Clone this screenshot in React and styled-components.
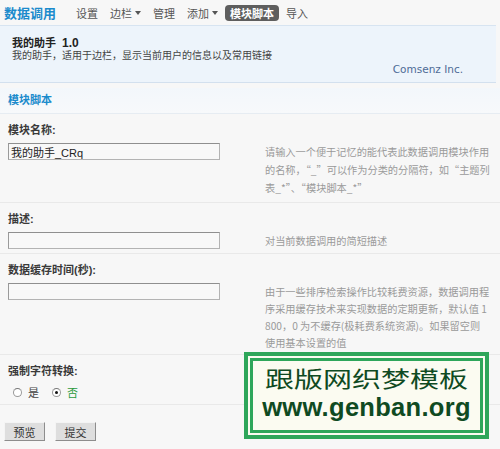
import React from "react";
import styled, { createGlobalStyle } from "styled-components";

const GlobalStyle = createGlobalStyle`
  body {
    margin: 0;
    background: #f7f7f7;
    font-family: "Liberation Sans", "Noto Sans CJK SC", sans-serif;
    color: #333;
  }
`;

const Page = styled.div`
  position: relative;
  width: 500px;
  height: 449px;
  overflow: hidden;
`;

const TopBar = styled.div`
  display: flex;
  align-items: center;
  height: 25px;
  padding-left: 4px;
`;

const Title = styled.h1`
  margin: 0 15px 0 0;
  font-size: 13px;
  font-weight: bold;
  color: #1b8bcc;
`;

const NavItem = styled.a`
  display: flex;
  align-items: center;
  height: 16px;
  padding: 0 5px;
  margin-right: 2px;
  border-radius: 4px;
  font-size: 11px;
  font-weight: ${(p) => (p.$active ? "bold" : "normal")};
  color: ${(p) => (p.$active ? "#fff" : "#555")};
  background: ${(p) => (p.$active ? "#5e5e5e" : "transparent")};
  text-decoration: none;
`;

const Caret = styled.span`
  margin-left: 3px;
  width: 0;
  height: 0;
  border-left: 3px solid transparent;
  border-right: 3px solid transparent;
  border-top: 4px solid #555;
`;

const InfoBox = styled.div`
  margin-right: 4px;
  padding: 11px 33px 6px 12px;
  background: #edf4fb;
  border-top: 1px solid #d7e4f1;
  border-bottom: 1px solid #d3e0ee;
`;

const InfoTitle = styled.div`
  font-size: 11px;
  font-weight: bold;
  line-height: 13px;
  color: #222;
  span {
    margin-left: 6px;
    font-size: 12px;
  }
`;

const InfoDesc = styled.div`
  font-size: 10px;
  line-height: 12px;
  color: #444;
`;

const InfoVendor = styled.div`
  text-align: right;
  font-family: "DejaVu Sans", sans-serif;
  font-size: 10.5px;
  line-height: 14px;
  color: #4d6b96;
`;

const SectionHead = styled.h3`
  margin: 5px 0 0;
  padding-left: 8px;
  height: 25px;
  line-height: 25px;
  font-size: 11px;
  font-weight: bold;
  color: #1b8bcc;
  background: linear-gradient(#f3f7fb, #f7f9fb);
  border-bottom: 1px solid #e6ecf2;
`;

const Group = styled.div`
  padding: 8px 0 ${(p) => p.$pb || 5}px 8px;
  border-top: ${(p) => (p.$first ? "none" : "1px solid #e9e9e9")};
`;

const Label = styled.div`
  font-size: 11px;
  font-weight: bold;
  line-height: 16px;
  color: #3a3a3a;
`;

const FieldRow = styled.div`
  display: grid;
  grid-template-columns: 257px 1fr;
  align-items: start;
  margin-top: 5px;
`;

const TextInput = styled.input`
  box-sizing: border-box;
  width: 212px;
  height: 17px;
  margin: 0;
  padding: 0 2px;
  font-family: "Liberation Sans", "Noto Sans CJK SC", sans-serif;
  font-size: 11px;
  color: #222;
  background: #f8f8f8;
  border: 1px solid #b3b3b3;
  border-top-color: #8f8f8f;
  border-left-color: #9a9a9a;
  outline: none;
`;

const Tip = styled.div`
  font-family: "Noto Sans CJK SC", sans-serif;
  font-size: 10.2px;
  line-height: ${(p) => p.$lh || 17}px;
  color: #9a9a9a;
  white-space: nowrap;
  span {
    display: block;
  }
`;

const Radios = styled.div`
  display: flex;
  align-items: center;
  height: 20px;
  margin-top: 3px;
  padding-left: 5px;
`;

const RadioOption = styled.label`
  display: flex;
  align-items: center;
  margin-right: 13px;
  font-size: 11px;
  color: ${(p) => (p.$checked ? "#2a9a3c" : "#444")};
`;

const RadioDot = styled.span`
  position: relative;
  box-sizing: border-box;
  width: 9px;
  height: 9px;
  margin-right: 6px;
  border-radius: 50%;
  background: #fff;
  border: 1px solid #9a9a9a;
  border-top-color: #777;
  &::after {
    content: "";
    display: ${(p) => (p.$checked ? "block" : "none")};
    position: absolute;
    left: 2px;
    top: 2px;
    width: 3px;
    height: 3px;
    border-radius: 50%;
    background: #111;
  }
`;

const Actions = styled.div`
  display: flex;
  gap: 10px;
  padding: 17px 0 0 4px;
  border-top: 1px solid #e9e9e9;
`;

const Button = styled.button`
  width: 41px;
  height: 19px;
  padding: 0;
  font-family: "Liberation Sans", "Noto Sans CJK SC", sans-serif;
  font-size: 11px;
  color: #333;
  background: #dedede;
  border: 1px solid;
  border-color: #f4f4f4 #8d8d8d #8d8d8d #f4f4f4;
`;

const Watermark = styled.div`
  position: absolute;
  left: 244px;
  top: 352px;
  width: 245px;
  height: 87px;
  box-sizing: border-box;
  border: 4px solid #2ea65a;
  padding: 2px;
  background: #fbfbf1;
`;

const WatermarkInner = styled.div`
  box-sizing: border-box;
  height: 100%;
  border: 3px solid #2ea65a;
  display: flex;
  flex-direction: column;
  align-items: center;
  color: #0f4a22;
`;

const WmTitle = styled.div`
  font-family: "Noto Sans CJK SC", sans-serif;
  font-size: 29px;
  line-height: 32px;
  transform: scaleY(0.75);
`;

const WmUrl = styled.div`
  font-family: "Liberation Sans", sans-serif;
  font-weight: bold;
  font-size: 25.5px;
  line-height: 29px;
  letter-spacing: 0.3px;
`;

const navItems = [
  { label: "设置" },
  { label: "边栏", caret: true },
  { label: "管理" },
  { label: "添加", caret: true },
  { label: "模块脚本", active: true },
  { label: "导入" },
];

const App = () => {
  return (
    <Page>
      <GlobalStyle />
      <TopBar>
        <Title>数据调用</Title>
        {navItems.map((item) => (
          <NavItem key={item.label} $active={item.active}>
            {item.label}
            {item.caret && <Caret />}
          </NavItem>
        ))}
      </TopBar>

      <InfoBox>
        <InfoTitle>
          我的助手<span>1.0</span>
        </InfoTitle>
        <InfoDesc>我的助手，适用于边栏，显示当前用户的信息以及常用链接</InfoDesc>
        <InfoVendor>Comsenz Inc.</InfoVendor>
      </InfoBox>

      <SectionHead>模块脚本</SectionHead>

      <Group $first $pb={0}>
        <Label>模块名称:</Label>
        <FieldRow>
          <TextInput defaultValue="我的助手_CRq" />
          <Tip $lh={18}>
            <span>请输入一个便于记忆的能代表此数据调用模块作用</span>
            <span>的名称，“_”可以作为分类的分隔符，如“主题列</span>
            <span>表_*”、“模块脚本_*”</span>
          </Tip>
        </FieldRow>
      </Group>

      <Group $pb={4}>
        <Label>描述:</Label>
        <FieldRow>
          <TextInput />
          <Tip>对当前数据调用的简短描述</Tip>
        </FieldRow>
      </Group>

      <Group $pb={3}>
        <Label>数据缓存时间(秒):</Label>
        <FieldRow>
          <TextInput />
          <Tip>
            <span>由于一些排序检索操作比较耗费资源，数据调用程</span>
            <span>序采用缓存技术来实现数据的定期更新，默认值 1</span>
            <span>800，0 为不缓存(极耗费系统资源)。如果留空则</span>
            <span>使用基本设置的值</span>
          </Tip>
        </FieldRow>
      </Group>

      <Group $pb={2}>
        <Label>强制字符转换:</Label>
        <Radios>
          <RadioOption>
            <RadioDot />是
          </RadioOption>
          <RadioOption $checked>
            <RadioDot $checked />否
          </RadioOption>
        </Radios>
      </Group>

      <Actions>
        <Button type="button">预览</Button>
        <Button type="button">提交</Button>
      </Actions>

      <Watermark>
        <WatermarkInner>
          <WmTitle>跟版网织梦模板</WmTitle>
          <WmUrl>www.genban.org</WmUrl>
        </WatermarkInner>
      </Watermark>
    </Page>
  );
};

export default App;
